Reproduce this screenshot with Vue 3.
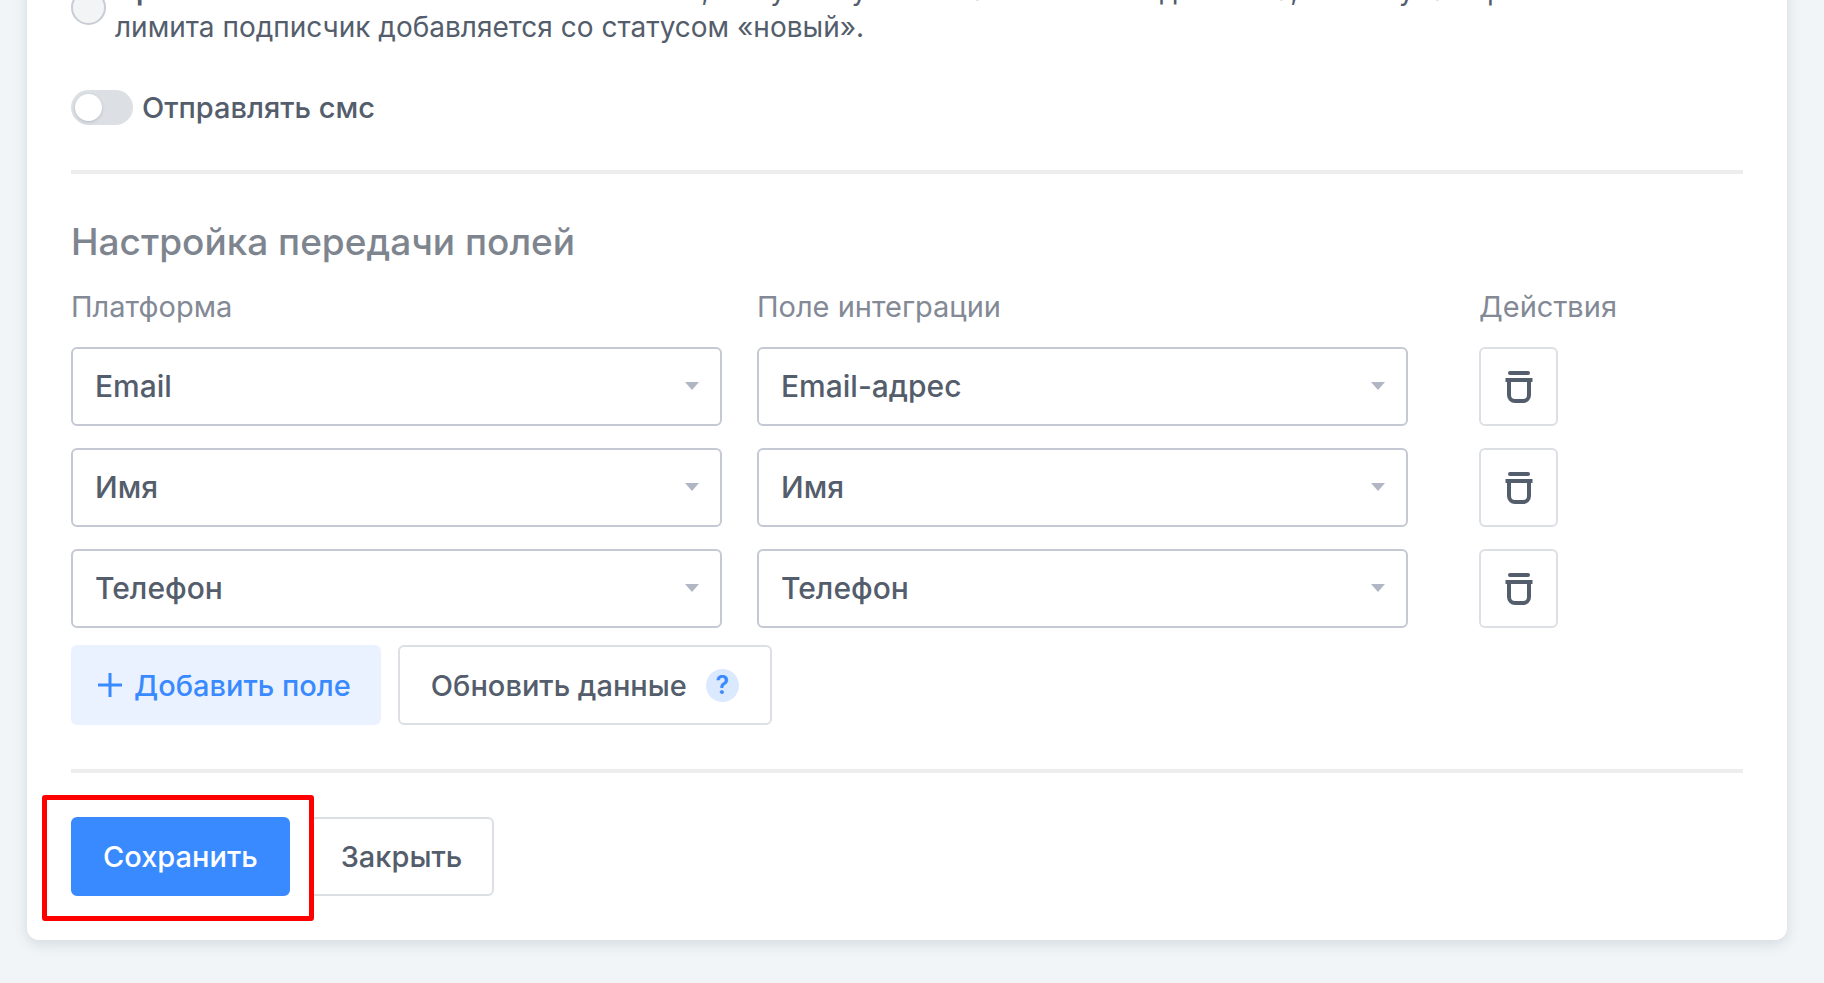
<script setup>
import { ref } from 'vue'

const sendSms = ref(false)
const statusMode = ref('')
const platformOptions = ['Email', 'Имя', 'Телефон']
const integrationOptions = ['Email-адрес', 'Имя', 'Телефон']
const rows = ref([
  { id: 1, platform: 'Email', target: 'Email-адрес' },
  { id: 2, platform: 'Имя', target: 'Имя' },
  { id: 3, platform: 'Телефон', target: 'Телефон' },
])
let nextId = 4

function addRow() {
  rows.value.push({ id: nextId++, platform: 'Email', target: 'Email-адрес' })
}
function removeRow(id) {
  rows.value = rows.value.filter((row) => row.id !== id)
}
</script>

<template>
  <main class="page">
    <form class="card" @submit.prevent>
      <label class="option">
        <input v-model="statusMode" class="radio" type="radio" name="status" value="limit" />
        <span class="option-text">
          <b>Присвоить состояние «активный»</b> и всем, кому он нужен в базе нового подписчика, то в случае превышения
          лимита подписчик добавляется со статусом «новый».
        </span>
      </label>

      <label class="switch-row">
        <input v-model="sendSms" class="switch" type="checkbox" role="switch" />
        <span>Отправлять смс</span>
      </label>

      <hr class="divider" />

      <h2 class="title">Настройка передачи полей</h2>

      <div class="fields">
        <span class="head">Платформа</span>
        <span class="head">Поле интеграции</span>
        <span class="head actions">Действия</span>
        <template v-for="row in rows" :key="row.id">
          <div class="select-box">
            <select v-model="row.platform" class="select" aria-label="Платформа">
              <option v-for="option in platformOptions" :key="option">{{ option }}</option>
            </select>
            <svg class="arrow" viewBox="0 0 14 8" aria-hidden="true"><path d="M0 0h14L7 8z" /></svg>
          </div>
          <div class="select-box">
            <select v-model="row.target" class="select" aria-label="Поле интеграции">
              <option v-for="option in integrationOptions" :key="option">{{ option }}</option>
            </select>
            <svg class="arrow" viewBox="0 0 14 8" aria-hidden="true"><path d="M0 0h14L7 8z" /></svg>
          </div>
          <div class="actions">
            <button class="icon-button" type="button" aria-label="Удалить" @click="removeRow(row.id)">
              <svg class="trash" viewBox="0 0 28 32" aria-hidden="true">
                <path d="M5 2h18" stroke-linecap="round" />
                <path d="M.5 9h27" />
                <path d="M4 9v15a6 6 0 0 0 6 6h8a6 6 0 0 0 6-6V9" />
              </svg>
            </button>
          </div>
        </template>
      </div>

      <div class="buttons tools">
        <button class="button add" type="button" @click="addRow">
          <svg class="plus" viewBox="0 0 24 24" aria-hidden="true"><path d="M12 0v24M0 12h24" /></svg>
          Добавить поле
        </button>
        <button class="button refresh" type="button">
          Обновить данные
          <span class="help">?</span>
        </button>
      </div>

      <hr class="divider" />

      <div class="buttons footer">
        <div class="highlighted">
          <button class="button primary" type="submit">Сохранить</button>
        </div>
        <button class="button" type="button">Закрыть</button>
      </div>
    </form>
  </main>
</template>

<style>
body {
  margin: 0;
  background: #f1f5f8;
}
</style>

<style scoped>
.page {
  box-sizing: border-box;
  min-height: 100vh;
  padding: 0 37px 43px 27px;
  overflow: hidden;
  background: #f1f5f8;
  color: #545d6b;
  font-family: Inter, "Liberation Sans", sans-serif;
  font-size: 29px;
  line-height: 37px;
}
.card {
  box-sizing: border-box;
  margin-top: -28px;
  padding: 0 44px 44px;
  border-radius: 12px;
  background: #fff;
  box-shadow: 0 4px 14px rgba(60, 80, 95, 0.16);
}
.option {
  display: flex;
  align-items: flex-start;
  gap: 9px;
}
.option-text {
  max-width: 1560px;
  font-size: 28px;
}
.option-text b {
  font-weight: 600;
}
.radio {
  appearance: none;
  box-sizing: border-box;
  flex: none;
  width: 35px;
  height: 35px;
  margin: 18px 0 0;
  border: 2px solid #c8ccd5;
  border-radius: 50%;
  background: #f3f4f6;
}
.radio:checked {
  border: 10px solid #3a8aff;
}
.switch-row {
  display: flex;
  align-items: center;
  gap: 9px;
  margin-top: 43px;
  font-weight: 500;
}
.switch {
  appearance: none;
  box-sizing: border-box;
  flex: none;
  width: 62px;
  height: 35px;
  margin: 0;
  padding: 4px;
  border-radius: 18px;
  background: #dce0e5;
}
.switch::before {
  content: "";
  display: block;
  width: 27px;
  height: 27px;
  border-radius: 50%;
  background: #fff;
  box-shadow: 0 1px 3px rgba(60, 70, 90, 0.25);
}
.switch:checked {
  padding-left: 31px;
  background: #3a8aff;
}
.divider {
  height: 4px;
  margin: 44px 0;
  border: 0;
  background: #ededed;
}
.title {
  margin: 0;
  color: #7e858f;
  font-size: 37px;
  font-weight: 500;
  line-height: 48px;
}
.fields {
  display: grid;
  grid-template-columns: 651fr 651fr 300fr;
  gap: 22px 35px;
  margin-top: 23px;
}
.head {
  color: #838a95;
  font-size: 29px;
  line-height: 36px;
}
.actions {
  padding-left: 36px;
}
.select-box {
  position: relative;
}
.select {
  appearance: none;
  display: block;
  box-sizing: border-box;
  width: 100%;
  height: 79px;
  padding: 0 60px 0 22px;
  border: 2px solid #c5c9d3;
  border-radius: 6px;
  background: #fff;
  color: inherit;
  font: inherit;
  font-size: 30px;
  font-weight: 500;
}
.arrow {
  position: absolute;
  top: 35px;
  right: 23px;
  width: 14px;
  height: 8px;
  fill: #b0b6c3;
  pointer-events: none;
}
.icon-button {
  display: flex;
  align-items: center;
  justify-content: center;
  box-sizing: border-box;
  width: 79px;
  height: 79px;
  padding: 0;
  border: 2px solid #dce0e5;
  border-radius: 6px;
  background: #fff;
}
.trash {
  width: 28px;
  height: 32px;
  fill: none;
  stroke: #545d6b;
  stroke-width: 4;
}
.buttons {
  display: flex;
  flex-wrap: wrap;
  gap: 17px;
}
.tools {
  margin-top: 17px;
}
.footer {
  gap: 19px;
}
.button {
  display: flex;
  align-items: center;
  justify-content: center;
  box-sizing: border-box;
  height: 79px;
  padding: 0 30px;
  border: 2px solid #dce0e5;
  border-radius: 6px;
  background: #fff;
  color: inherit;
  font: inherit;
  font-weight: 500;
}
.tools .button {
  height: 80px;
}
.tools .add {
  gap: 12px;
  padding: 0 28px 0 25px;
  border-color: #ebf2ff;
  background: #ebf2ff;
  color: #3a8aff;
}
.plus {
  width: 24px;
  height: 24px;
  fill: none;
  stroke: currentColor;
  stroke-width: 3;
}
.tools .refresh {
  gap: 19px;
  padding: 0 31px;
}
.help {
  width: 33px;
  height: 33px;
  border-radius: 50%;
  background: #dbe9ff;
  color: #3a8aff;
  font-size: 25px;
  font-weight: 600;
  line-height: 33px;
}
.highlighted {
  position: relative;
}
.highlighted::after {
  content: "";
  position: absolute;
  z-index: 1;
  inset: -22px -24px -25px -29px;
  border: 5px solid #f00;
  border-radius: 3px;
  pointer-events: none;
}
.primary {
  border-color: #3a8aff;
  background: #3a8aff;
  color: #fff;
}
</style>
